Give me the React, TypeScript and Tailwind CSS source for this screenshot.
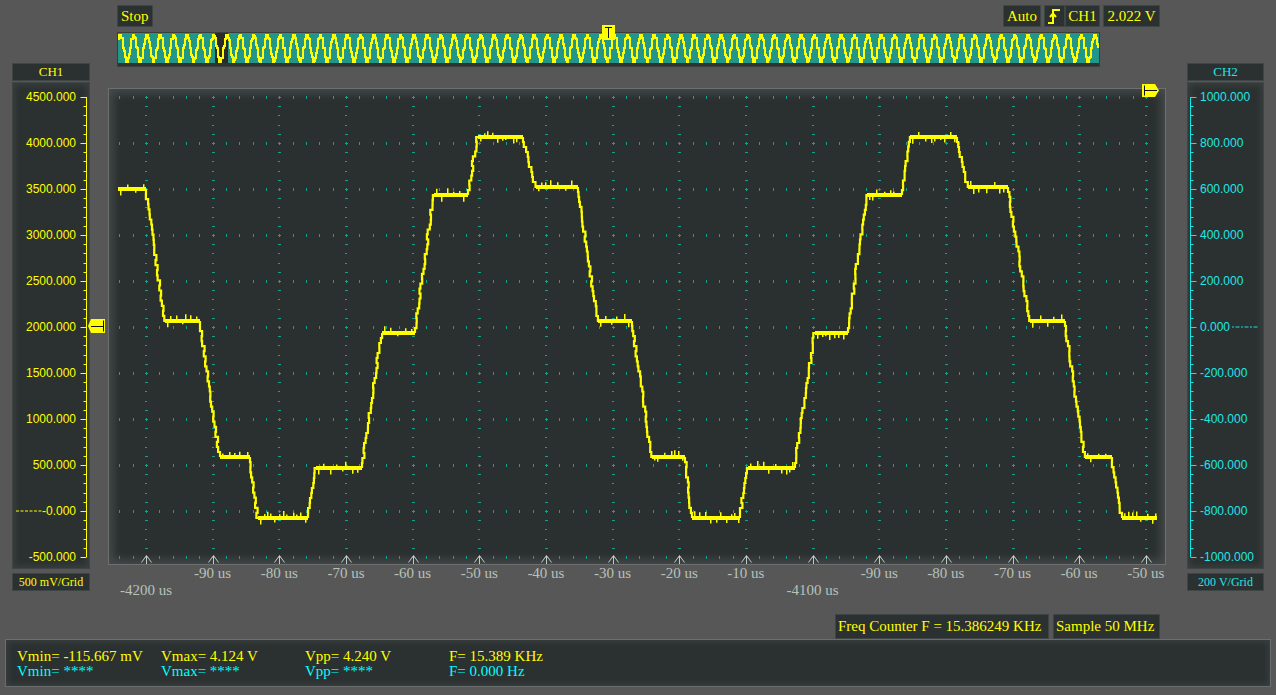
import React from "react";

const LEFT_SCALE = ["4500.000", "4000.000", "3500.000", "3000.000", "2500.000", "2000.000", "1500.000", "1000.000", "500.000", "-0.000", "-500.000"];
const RIGHT_SCALE = ["1000.000", "800.000", "600.000", "400.000", "200.000", "0.000", "-200.000", "-400.000", "-600.000", "-800.000", "-1000.000"];
const TIME_TOP = ["", "-90 us", "-80 us", "-70 us", "-60 us", "-50 us", "-40 us", "-30 us", "-20 us", "-10 us", "", "-90 us", "-80 us", "-70 us", "-60 us", "-50 us"];
const TIME_BOTTOM = ["-4200 us", "", "", "", "", "", "", "", "", "", "-4100 us", "", "", "", "", ""];

// [start x, end x, mV] of every step of the captured trace
const plateaus: [number, number, number][] = [
  [118, 146, 3500], [165, 200, 2070], [220, 250, 590], [258, 308, -80], [316, 362, 470],
  [382, 415, 1940], [434, 468, 3440], [478, 523, 4070], [536, 578, 3520], [598, 632, 2070],
  [652, 685, 590], [692, 740, -80], [748, 795, 470], [815, 848, 1940], [867, 902, 3440],
  [910, 957, 4070], [968, 1008, 3520], [1030, 1065, 2070], [1085, 1112, 590], [1122, 1157, -80],
];

const yv = (v: number) => 97 + ((4500 - v) * 46) / 500;
const rnd = (i: number) => {
  const s = Math.sin(i * 127.1 + 311.7) * 43758.5453;
  return s - Math.floor(s);
};

const majorX = Array.from({ length: 16 }, (_, k) => Math.round(146 + (k * 200) / 3));
const majorY = Array.from({ length: 11 }, (_, j) => 97 + j * 46);

function valAt(x: number) {
  for (let i = 0; i < plateaus.length; i++) {
    const [x0, x1, v] = plateaus[i];
    if (x >= x0 && x <= x1) return v;
    const n = plateaus[i + 1];
    if (n && x > x1 && x < n[0]) return v + ((n[2] - v) * (x - x1)) / (n[0] - x1);
  }
  return 2000;
}

function gridPath() {
  let g = "";
  majorY.forEach((y) => {
    for (let i = 0; i <= 77; i++) {
      if (i % 5 === 2) continue;
      const x = Math.round(119.33 + (i * 40) / 3);
      if (x > 1147) break;
      g += `M${x} ${y - 1}h1v3h-1z`;
    }
  });
  majorX.forEach((x) => {
    for (let m = 1; m < 50; m++) {
      if (m % 5 === 0) continue;
      const y = Math.round(97 + m * 9.2);
      const w = m % 5 === 1 || m % 5 === 4 ? 3 : 2;
      g += `M${x - 1} ${y}h${w}v1h-${w}z`;
    }
    majorY.forEach((y) => {
      g += `M${x - 1} ${y}h3v1h-3zM${x} ${y - 1}h1v3h-1z`;
    });
  });
  return g;
}

function wavePaths() {
  let bands = "";
  let line = "";
  plateaus.forEach(([x0, x1, v], idx) => {
    const y = Math.round(yv(v));
    bands += `M${x0} ${y - 2}H${x1}V${y + 2}H${x0}Z`;
    let x = x0 + 2;
    while (x < x1 - 1) {
      const len = 1 + rnd(idx * 37 + x * 3) * 4;
      if (rnd(x * 7 + idx) > 0.5) bands += `M${x} ${y - 2 - len}h1.5V${y}h-1.5Z`;
      else bands += `M${x} ${y}h1.5V${y + 2 + len}h-1.5Z`;
      x += 3 + Math.floor(rnd(idx * 100 + x) * 6);
    }
    if (idx < plateaus.length - 1) {
      const [nx0, , nv] = plateaus[idx + 1];
      const ny = Math.round(yv(nv));
      const steps = Math.max(3, Math.round(Math.abs(ny - y) / 5));
      line += `M${x1} ${y}`;
      for (let s = 1; s <= steps; s++) {
        const t = s / steps;
        const xx = x1 + (nx0 - x1) * t + (s < steps ? (rnd(idx * 13 + s) - 0.5) * 2 : 0);
        const yy = y + (ny - y) * t;
        line += `V${yy.toFixed(1)}H${xx.toFixed(1)}`;
      }
    }
  });
  return { bands, line };
}

// whole record, squeezed into the overview strip (one period ~13.35px)
function stripPath() {
  let d = "";
  const P = 13.35;
  for (let x = 118; x <= 1098; x++) {
    const ph = ((((x - 118) / P) * 432 + 300) % 432 + 432) % 432;
    const v = valAt(146 + ph);
    const y = Math.round(48 - ((v - 2000) / 2075) * 13.5);
    d += x === 118 ? `M${x} ${y}` : `H${x}V${y}`;
  }
  return d;
}

const grid = gridPath();
const wave = wavePaths();
const strip = stripPath();

function ScaleTicks({ x, dir, color }: { x: number; dir: number; color: string }) {
  let d = `M${x} 97V557`;
  for (let m = 0; m <= 50; m++) {
    const y = Math.round(97 + m * 9.2) + 0.5;
    const len = m % 5 === 0 ? 6 : 3;
    d += `M${x} ${y}h${dir * len}`;
  }
  return <path d={d} stroke={color} strokeWidth="1" fill="none" />;
}

function Header({ label, color }: { label: string; color: string }) {
  return (
    <div className={`h-[18px] border border-[#3f4444] bg-[#2b3030] text-center text-[13px] leading-[16px] ${color}`}>{label}</div>
  );
}

export default function App() {
  return (
    <div className="relative w-[1276px] h-[695px] overflow-hidden bg-[#575757] font-['Liberation_Serif',serif] flex flex-col">
      <div className="flex">
        {/* CH1 scale */}
        <div className="ml-[12px] w-[78px] pt-[63px] flex flex-col">
          <Header label="CH1" color="text-[#ffff00]" />
          <div className="mt-[1px] h-[487px] flex border border-[#3f4444] bg-[#2b3030] shadow-[inset_0_0_6px_2px_#3b4040]">
            <div className="flex-1 flex flex-col items-end gap-[28px] pt-[5px] pr-[2px] font-['Liberation_Sans',sans-serif] text-[12px] leading-[18px] text-[#ffff00]">
              {LEFT_SCALE.map((l) =>
                l === "-0.000" ? (
                  <div key={l} className="w-full flex items-center">
                    <svg width="26" height="2" className="ml-[3px] mr-auto">
                      <path d="M0 1H26" stroke="#ffff00" strokeWidth="1" strokeDasharray="3 1.5" />
                    </svg>
                    <span>{l}</span>
                  </div>
                ) : (
                  <div key={l} className="h-[18px]">{l}</div>
                )
              )}
            </div>
            <svg width="11" height="485" viewBox="78 83 11 485" className="shrink-0">
              <ScaleTicks x={86.5} dir={-1} color="#ffff00" />
            </svg>
          </div>
          <div className="mt-[4px] h-[18px] border border-[#3f4444] bg-[#2b3030] text-center text-[12px] leading-[16px] text-[#ffff00]">500 mV/Grid</div>
        </div>

        {/* centre */}
        <div className="ml-[18px] w-[1058px] flex flex-col">
          <div className="mt-[5px] h-[22px] flex text-[15px] text-[#ffff00]">
            <div className="ml-[9px] w-[36px] border border-[#3f4444] bg-[#2b3030] pl-[3px] leading-[20px]">Stop</div>
            <div className="ml-auto mr-[6px] flex">
              <div className="w-[38px] border border-[#3f4444] bg-[#2b3030] text-center leading-[20px]">Auto</div>
              <div className="ml-[3px] w-[21px] border border-[#3f4444] bg-[#2b3030] flex items-center justify-center">
                <svg width="15" height="18" viewBox="0 0 15 18">
                  <path d="M1 16H6V3H13M3 10L6 6.5L9 10" stroke="#ffff00" strokeWidth="2" fill="none" />
                </svg>
              </div>
              <div className="w-[35px] border border-[#3f4444] bg-[#2b3030] text-center leading-[20px]">CH1</div>
              <div className="ml-[3px] w-[57px] border border-[#3f4444] bg-[#2b3030] text-center leading-[20px]">2.022 V</div>
            </div>
          </div>

          <div className="mt-[5px] ml-[9px] w-[983px] h-[35px] border border-[#3a3e3e] bg-[#2e3232] pb-[3px]">
            <svg width="981" height="30" viewBox="118 33 981 30" className="block bg-[#23968a]" shapeRendering="crispEdges">
              <rect x="215" y="33" width="13" height="30" fill="#2a2a2a" />
              <path d={strip} stroke="#ffff00" strokeWidth="2" fill="none" />
            </svg>
          </div>

          <div className="mt-[21px] h-[477px] border border-[#6c7070] bg-[#2a2f2f] shadow-[inset_0_0_10px_4px_#464b4b]">
            <svg width="1056" height="475" viewBox="109 89 1056 475" className="block">
              <path d={grid} fill="#19a08d" />
              {majorX.map((x) => (
                <path key={x} d={`M${x - 4.5} 562.5L${x + 0.5} 555.5L${x + 5.5} 562.5M${x + 0.5} 556V564`} stroke="#c3ccc7" strokeWidth="1" fill="none" />
              ))}
              <path d={wave.line} stroke="#ffff00" strokeWidth="2.2" fill="none" />
              <path d={wave.bands} fill="#ffff00" />
            </svg>
          </div>

          <div className="flex pl-[4.67px] text-[15px] leading-[17px] text-[#b6c2ba]">
            {TIME_TOP.map((t, i) => (
              <div key={i} className="w-[66.667px] shrink-0 text-center whitespace-nowrap">{t}</div>
            ))}
          </div>
          <div className="flex pl-[4.67px] text-[15px] leading-[17px] text-[#b6c2ba]">
            {TIME_BOTTOM.map((t, i) => (
              <div key={i} className="w-[66.667px] shrink-0 text-center whitespace-nowrap">{t}</div>
            ))}
          </div>

          <div className="mt-[15px] h-[25px] flex justify-end gap-[4px] mr-[6px] text-[15px] leading-[23px] text-[#ffff00]">
            <div className="w-[214px] border border-[#3f4444] bg-[#2b3030] pl-[2px] whitespace-nowrap">Freq Counter F = 15.386249 KHz</div>
            <div className="w-[107px] border border-[#3f4444] bg-[#2b3030] pl-[2px] whitespace-nowrap">Sample 50 MHz</div>
          </div>
        </div>

        {/* CH2 scale */}
        <div className="ml-[21px] w-[77px] pt-[63px] flex flex-col">
          <Header label="CH2" color="text-[#20e6e6]" />
          <div className="mt-[1px] h-[487px] flex border border-[#3f4444] bg-[#2b3030] shadow-[inset_0_0_6px_2px_#3b4040]">
            <svg width="11" height="485" viewBox="1188 83 11 485" className="shrink-0">
              <ScaleTicks x={1190.5} dir={1} color="#10e6e6" />
            </svg>
            <div className="flex-1 flex flex-col gap-[28px] pt-[5px] pl-[1px] font-['Liberation_Sans',sans-serif] text-[12px] leading-[18px] text-[#20e6e6]">
              {RIGHT_SCALE.map((l) =>
                l === "0.000" ? (
                  <div key={l} className="flex items-center">
                    <span>{l}</span>
                    <svg width="27" height="2" className="ml-[2px]">
                      <path d="M0 1H27" stroke="#10e6e6" strokeWidth="1.2" strokeDasharray="2 1.5 4 1.5" />
                    </svg>
                  </div>
                ) : (
                  <div key={l} className="h-[18px] whitespace-nowrap">{l}</div>
                )
              )}
            </div>
          </div>
          <div className="mt-[4px] h-[18px] border border-[#3f4444] bg-[#2b3030] text-center text-[12px] leading-[16px] text-[#20e6e6]">200 V/Grid</div>
        </div>
      </div>

      {/* measurements */}
      <div className="ml-[5px] w-[1266px] h-[48px] border border-[#6a6e6e] bg-[#2b3030] shadow-[inset_0_0_6px_2px_#3a3f3f] pl-[11px] pt-[9px] text-[15px] leading-[15px]">
        <div className="flex text-[#ffff00]">
          <div className="w-[144px] whitespace-nowrap">Vmin= -115.667 mV</div>
          <div className="w-[144px] whitespace-nowrap">Vmax= 4.124 V</div>
          <div className="w-[144px] whitespace-nowrap">Vpp= 4.240 V</div>
          <div className="w-[144px] whitespace-nowrap">F= 15.389 KHz</div>
        </div>
        <div className="flex text-[#00ffff]">
          <div className="w-[144px] whitespace-nowrap">Vmin= ****</div>
          <div className="w-[144px] whitespace-nowrap">Vmax= ****</div>
          <div className="w-[144px] whitespace-nowrap">Vpp= ****</div>
          <div className="w-[144px] whitespace-nowrap">F= 0.000 Hz</div>
        </div>
      </div>

      {/* markers lying over the panels */}
      <svg className="absolute left-[602px] top-[25px]" width="13" height="15" viewBox="0 0 13 15">
        <rect width="13" height="15" fill="#ffff00" />
        <path d="M3 2.5H10M6.5 2.5V13" stroke="#111" strokeWidth="1" fill="none" />
      </svg>
      <svg className="absolute left-[1142px] top-[84px]" width="17" height="13" viewBox="0 0 17 13">
        <path d="M0 0H13L17 6.5L13 13H0Z" fill="#ffff00" />
        <path d="M2.5 1.5V11.5M2.5 6.5H15" stroke="#111" strokeWidth="1" fill="none" />
      </svg>
      <svg className="absolute left-[88px] top-[319px]" width="17" height="14" viewBox="0 0 17 14">
        <path d="M0 7L3 0H17V14H3Z" fill="#ffff00" />
        <path d="M3 7.5H15.5M15.5 1.5V12.5" stroke="#111" strokeWidth="1" fill="none" />
      </svg>
    </div>
  );
}
